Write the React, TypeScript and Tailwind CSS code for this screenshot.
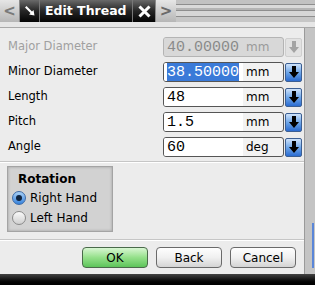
import React from "react";

const font = { fontFamily: '"DejaVu Sans", Verdana, sans-serif' };

function DownArrow({ color = "#000" }: { color?: string }) {
  return (
    <svg width="10" height="12" viewBox="0 0 10 12">
      <path d="M3 0h4v6h3l-5 6-5-6h3z" fill={color} />
    </svg>
  );
}

type Field = { label: string; value: string; unit: string; disabled?: boolean; selected?: boolean };

const fields: Field[] = [
  { label: "Major Diameter", value: "40.00000", unit: "mm", disabled: true },
  { label: "Minor Diameter", value: "38.50000", unit: "mm", selected: true },
  { label: "Length", value: "48", unit: "mm" },
  { label: "Pitch", value: "1.5", unit: "mm" },
  { label: "Angle", value: "60", unit: "deg" },
];

function FieldRow({ f }: { f: Field }) {
  return (
    <div className="flex items-center h-[20px]">
      <div className={`w-[163px] pl-[8px] text-[11.5px] ${f.disabled ? "text-[#a0a0a0]" : "text-black"}`}>
        {f.label}
      </div>
      <div
        className={`flex h-[20px] w-[121px] rounded-[3px] border overflow-hidden ${
          f.disabled ? "border-[#b4b4b4] bg-[#d8d8d8]" : "border-[#555] bg-[#f2f2f2]"
        }`}
      >
        <div
          className={`w-[79px] flex items-center pl-[3px] text-[15px] leading-none ${
            f.disabled ? "bg-[#d8d8d8] text-[#8a8a8a]" : "bg-white text-black"
          }`}
          style={{ fontFamily: '"Liberation Mono", "Courier New", monospace' }}
        >
          <span className={f.selected ? "bg-[#3a7ad8] text-white py-[2px]" : ""}>{f.value}</span>
        </div>
        <div className={`flex items-center pl-[3px] text-[12px] ${f.disabled ? "text-[#9a9a9a]" : "text-black"}`}>
          {f.unit}
        </div>
      </div>
      {f.disabled ? (
        <div className="ml-[1px] w-[17px] h-[19px] flex items-center justify-center rounded-[2px] bg-[#e2e2e2] border border-[#cfcfcf]">
          <DownArrow color="#a4a4a4" />
        </div>
      ) : (
        <div className="ml-[1px] w-[17px] h-[19px] flex items-center justify-center rounded-[2px] border border-[#3c5f92] bg-gradient-to-b from-[#cfe3fa] via-[#6ea6e8] to-[#2a6bd0]">
          <DownArrow />
        </div>
      )}
    </div>
  );
}

function Radio({ checked }: { checked?: boolean }) {
  return checked ? (
    <div className="w-[14px] h-[14px] rounded-full border border-[#3d6aa6] bg-gradient-to-b from-[#a8d0f6] to-[#3583dc] flex items-center justify-center">
      <div className="w-[6px] h-[6px] rounded-full bg-[#10243f]" />
    </div>
  ) : (
    <div className="w-[14px] h-[14px] rounded-full border border-[#8a8a8a] bg-gradient-to-b from-[#fafafa] to-[#cfcfcf]" />
  );
}

function Button({ label, primary }: { label: string; primary?: boolean }) {
  return (
    <div
      className={`w-[66px] h-[21px] flex items-center justify-center rounded-[4px] border text-[12px] text-black ${
        primary
          ? "border-[#4a6a4a] bg-gradient-to-b from-[#d8f6d2] via-[#94e08a] to-[#5cc45a]"
          : "border-[#6a6a6a] bg-gradient-to-b from-[#fefefe] via-[#f0f0f0] to-[#d4d4d4]"
      }`}
    >
      {label}
    </div>
  );
}

export default function App() {
  return (
    <div className="w-[315px] h-[285px] bg-[#c4c4c4] flex flex-col overflow-hidden" style={font}>
      {/* Title bar */}
      <div className="h-[22px] flex">
        <div className="w-[20px] flex items-center justify-center bg-gradient-to-b from-[#e6e6e6] to-[#b6b6b6] border-r border-[#8a8a8a] text-[#7a7a7a] text-[15px] font-bold">
          &lt;
        </div>
        <div className="flex bg-gradient-to-b from-[#6a6a6a] via-[#262626] to-[#050505]">
          <div className="w-[20px] flex items-center justify-center border-r border-[#777]">
            <svg width="12" height="12" viewBox="0 0 12 12">
              <path d="M1 2.5 2.5 1 8 6.5 9.5 5 10.5 10.5 5 9.5 6.5 8z" fill="#fff" />
            </svg>
          </div>
          <div className="w-[93px] flex items-center pl-[5px] text-white text-[12.5px] font-bold border-r border-[#777]">
            Edit Thread
          </div>
          <div className="w-[22px] flex items-center justify-center">
            <svg width="13" height="13" viewBox="0 0 13 13">
              <path d="M1.5 1.5 11.5 11.5M11.5 1.5 1.5 11.5" stroke="#fff" strokeWidth="3" />
            </svg>
          </div>
        </div>
        <div className="w-[21px] flex items-center justify-center bg-gradient-to-b from-[#e6e6e6] to-[#b6b6b6] border-l border-[#8a8a8a] text-[#6a6a6a] text-[15px] font-bold">
          &gt;
        </div>
        <div className="flex-1 flex flex-col">
          <div className="h-[4px] bg-[#c2c2c2]" />
          <div className="h-[1px] bg-[#8e8e8e]" />
          <div className="h-[3px] bg-[#dadada]" />
          <div className="h-[2px] bg-[#b4b4b4]" />
          <div className="h-[1px] bg-[#8e8e8e]" />
          <div className="h-[5px] bg-[#d6d6d6]" />
          <div className="h-[1px] bg-[#8e8e8e]" />
          <div className="h-[5px] bg-[#c6c6c6]" />
        </div>
      </div>
      <div className="h-[6px] bg-[#e6e6e6] border-b border-[#a8a8a8]" />

      {/* Body */}
      <div className="flex-1 flex">
        <div className="w-[305px] bg-[#ececec] border-r border-[#9a9a9a] flex flex-col pt-[9px]">
          <div className="flex flex-col gap-[5px]">
            {fields.map((f) => (
              <FieldRow key={f.label} f={f} />
            ))}
          </div>
          <div className="mt-[4px] h-[2px] border-t border-[#c6c6c6] border-b border-b-white" />
          <div className="ml-[7px] mt-[3px] w-[106px] h-[66px] bg-[#d2d2d2] border border-[#a4a4a4] shadow-[inset_0_0_3px_rgba(0,0,0,0.25)] flex flex-col pl-[4px] pt-[3px]">
            <div className="pl-[6px] text-[12px] font-bold text-black h-[18px] flex items-center">Rotation</div>
            <div className="flex items-center gap-[4px] h-[20px] text-[12px]">
              <Radio checked />
              <span>Right Hand</span>
            </div>
            <div className="flex items-center gap-[4px] h-[20px] text-[12px]">
              <Radio />
              <span>Left Hand</span>
            </div>
          </div>
          <div className="mt-[7px] h-[2px] border-t border-[#c6c6c6] border-b border-b-white" />
          <div className="flex justify-end gap-[8px] pr-[8px] mt-[6px]">
            <Button label="OK" primary />
            <Button label="Back" />
            <Button label="Cancel" />
          </div>
        </div>
        <div className="flex-1 flex justify-end pr-[1px] bg-[#c4c4c4]">
          <div className="w-[2px] mt-[195px] mb-[6px] bg-[#5a86d8]" />
        </div>
      </div>
      <div className="h-[11px] bg-gradient-to-b from-[#444] to-[#000]" />
    </div>
  );
}
